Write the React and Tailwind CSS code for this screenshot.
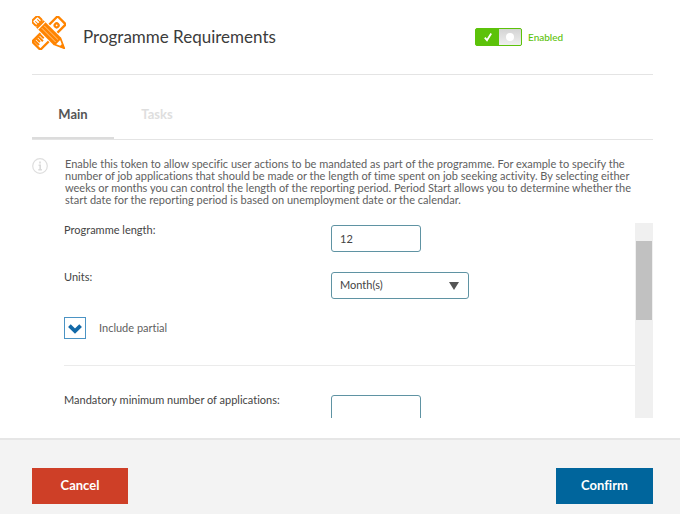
import { useState } from "react";

function ToolsIcon() {
  return (
    <svg viewBox="-17 -17 34 34" className="-mt-2 size-[34px] shrink-0" aria-hidden="true">
      <g transform="rotate(-45)">
        <rect x="-18" y="-5.800" width="36" height="11.600" rx="1.500" fill="#fff" stroke="#ff8400" strokeWidth="2.400" />
        <circle cx="10.800" cy="0" r="2" fill="none" stroke="#ff8400" strokeWidth="2.200" />
        <path d="M-15.500-5v6.500M-12.800-5v5M-10.100-5v6.500M-7.400-5v5" stroke="#ff8400" strokeWidth="2" />
      </g>
      <g transform="rotate(45)">
        <path d="M-21-6.200h35L24 0l-10 6.200h-35z" fill="#fff" />
        <rect x="-20.500" y="-4.200" width="7" height="8.400" rx="2" fill="#fff" stroke="#ff8400" strokeWidth="2" />
        <path d="M-18-1.400h4M-18 1.400h4" stroke="#ff8400" strokeWidth="1" />
        <path d="M-13-5.200h25v10.400h-25z" fill="#ff8400" />
        <path d="M-10.500-5.200v10.400" stroke="#fff" strokeWidth="1.100" />
        <path d="M-8.500-1.700h20M-8.500 1.700h20" stroke="#fff" strokeWidth="0.500" />
        <path d="M12-4.300 21.500 0 12 4.300z" fill="#fff" stroke="#ff8400" strokeWidth="1.800" strokeLinejoin="round" />
        <path d="M17-2.400 22.500 0 17 2.400z" fill="#ff8400" />
      </g>
    </svg>
  );
}

function InfoIcon() {
  return (
    <svg viewBox="0 0 16 16" className="size-4 shrink-0" aria-hidden="true">
      <circle cx="8" cy="8" r="7.300" fill="none" stroke="#dedede" strokeWidth="1.200" />
      <path d="M8 3.600v1.800M6.600 7.200H8.200v4.400M6.300 11.800h3.600" fill="none" stroke="#dadada" strokeWidth="1.600" />
    </svg>
  );
}

function EnabledSwitch() {
  const [on, setOn] = useState(true);
  return (
    <label className="flex items-center gap-1.5 text-[10px] font-medium text-[#5cc20a]">
      <input
        type="checkbox"
        role="switch"
        checked={on}
        onChange={(e) => setOn(e.target.checked)}
        className="sr-only"
      />
      <span className="flex h-[18px] w-[47px] overflow-hidden rounded-xs border border-[#5cc20a] bg-[#5cc20a]" aria-hidden="true">
        <span className="flex flex-1 items-center justify-center">
          <svg viewBox="0 0 10 10" className="size-2.5">
            <path d="M1.800 5.600 4 8.200 8.200 1.600" fill="none" stroke="#fff" strokeWidth="1.800" />
          </svg>
        </span>
        <span className="flex w-[22px] items-center justify-center bg-linear-to-b from-[#d4d4d4] to-[#efefef]">
          <span className="size-2 rounded-full bg-white" />
        </span>
      </span>
      Enabled
    </label>
  );
}

function Field({ id, label, children }) {
  return (
    <div className="flex items-start">
      <label htmlFor={id} className="w-[267px] shrink-0 leading-2.5">
        {label}
      </label>
      {children}
    </div>
  );
}

const box = "h-[27px] rounded-[3px] border border-[#5f93a3] bg-white px-2 text-[11px] text-[#444]";

export default function App() {
  const [tab, setTab] = useState("Main");
  const [partial, setPartial] = useState(true);
  return (
    <main className="flex min-h-screen flex-col bg-white font-['Trebuchet_MS',Lato,sans-serif] text-[11px] text-[#444] [font-variant-ligatures:none]">
      <div className="flex-1 pr-[27px] pl-8">
        <header className="flex h-[75px] items-center border-b border-[#e4e4e4]">
          <ToolsIcon />
          <h1 className="ml-[17px] w-[392px] text-[17px] text-[#3c3c3c]">Programme Requirements</h1>
          <EnabledSwitch />
        </header>

        <div role="tablist" className="mt-[17px] flex h-12 border-b border-[#e4e4e4] text-[13px] font-bold">
          {["Main", "Tasks"].map((name) => (
            <button
              key={name}
              type="button"
              role="tab"
              aria-selected={tab === name}
              onClick={() => setTab(name)}
              className={
                tab === name
                  ? "w-[82px] border-b-2 border-[#dcdcdc] text-[#555]"
                  : "w-[86px] border-b-2 border-transparent text-[#dedede]"
              }
            >
              {name}
            </button>
          ))}
        </div>

        <div className="mt-[18px] flex gap-[17px] pr-[14px]">
          <InfoIcon />
          <p className="leading-3 text-[#606060]">
            Enable this token to allow specific user actions to be mandated as part of the programme. For example to
            specify the number of job applications that should be made or the length of time spent on job seeking
            activity. By selecting either weeks or months you can control the length of the reporting period. Period
            Start allows you to determine whether the start date for the reporting period is based on unemployment date
            or the calendar.
          </p>
        </div>

        <div className="mt-[17px] flex h-[195px] pl-8">
          <form className="flex-1 overflow-hidden pt-0.5">
            <Field id="length" label="Programme length:">
              <input id="length" type="text" defaultValue="12" className={`${box} w-[90px]`} />
            </Field>
            <div className="mt-5">
              <Field id="units" label="Units:">
                <div className="relative">
                  <select id="units" className={`${box} w-[138px] appearance-none`}>
                    <option>Month(s)</option>
                    <option>Week(s)</option>
                  </select>
                  <svg viewBox="0 0 10 8" className="pointer-events-none absolute top-2.5 right-2.5 h-2 w-2.5" aria-hidden="true">
                    <path d="M0 0h10L5 8z" fill="#555" />
                  </svg>
                </div>
              </Field>
            </div>
            <label className="mt-[18px] flex items-center gap-[13px] text-[#606060]">
              <span className="relative size-[22px]">
                <input
                  type="checkbox"
                  checked={partial}
                  onChange={(e) => setPartial(e.target.checked)}
                  className="block size-full appearance-none border border-[#4b93c4] bg-white"
                />
                {partial && (
                  <svg viewBox="0 0 14 11" className="pointer-events-none absolute top-1.5 left-1 h-[11px] w-3.5" aria-hidden="true">
                    <path d="M1.400 2.600 7 8l5.600-5.400" fill="none" stroke="#1269a8" strokeWidth="3.800" />
                  </svg>
                )}
              </span>
              Include partial
            </label>
            <hr className="mt-[26px] mb-[29px] border-[#ebebeb]" />
            <Field id="minimum" label="Mandatory minimum number of applications:">
              <input id="minimum" type="text" className={`${box} w-[90px]`} />
            </Field>
          </form>
          <div className="w-[18px] bg-[#f0f0f0] px-px pt-[18px]" aria-hidden="true">
            <div className="h-[79px] bg-[#c1c1c1]" />
          </div>
        </div>
      </div>

      <footer className="mt-5 flex justify-between border-t-2 border-[#e6e6e6] bg-[#f3f3f3] pt-7 pr-[27px] pb-[10px] pl-8 text-[13px] font-bold text-white">
        <button type="button" className="h-9 w-24 bg-[#ce3f27]">
          Cancel
        </button>
        <button type="button" className="h-9 w-[97px] bg-[#00659c]">
          Confirm
        </button>
      </footer>
    </main>
  );
}
